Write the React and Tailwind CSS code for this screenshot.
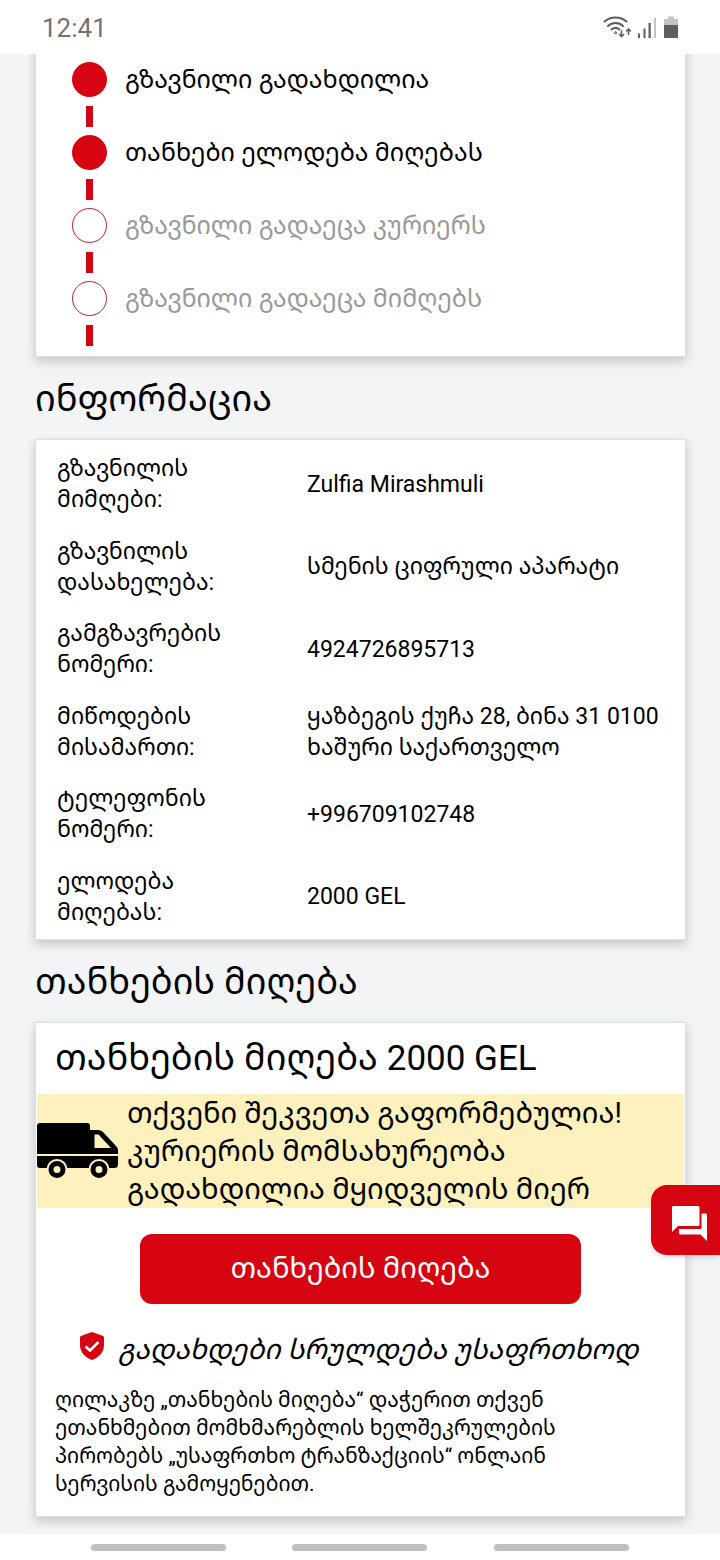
const steps = [
  { label: 'გზავნილი გადახდილია', done: true },
  { label: 'თანხები ელოდება მიღებას', done: true },
  { label: 'გზავნილი გადაეცა კურიერს', done: false },
  { label: 'გზავნილი გადაეცა მიმღებს', done: false },
];

const info = [
  { label: 'გზავნილის მიმღები:', value: 'Zulfia Mirashmuli' },
  { label: 'გზავნილის დასახელება:', value: 'სმენის ციფრული აპარატი' },
  { label: 'გამგზავრების ნომერი:', value: '4924726895713' },
  { label: 'მიწოდების მისამართი:', value: 'ყაზბეგის ქუჩა 28, ბინა 31 0100 ხაშური საქართველო' },
  { label: 'ტელეფონის ნომერი:', value: '+996709102748' },
  { label: 'ელოდება მიღებას:', value: '2000 GEL' },
];

const StatusBar = () => (
  <header className="relative z-10 flex h-[54px] items-center justify-between bg-white pt-[2px] pr-[41px] pl-[42px] text-[#737373]">
    <span className="text-[26px] leading-8">12:41</span>
    <div className="flex items-center gap-[6px]">
      <svg className="h-6 w-7" viewBox="0 0 28 24" fill="none" stroke="#5f5f5f" strokeWidth="2" strokeLinecap="round">
        <path d="M1.500 5.500C7.500 0 17.500 0 23.500 5.500" />
        <path d="M5 10C9 6 16 6 20 10" />
        <path d="M8.500 13.500C11 11.500 14 11.500 16.500 13.500" />
        <circle cx="12.500" cy="16.800" r="0.500" />
        <path d="M18.500 15v5.500M16.500 18.500l2 2 2-2M25.500 18.500v-5.500M23.500 15l2-2 2 2" strokeWidth="1.600" />
      </svg>
      <svg className="h-6 w-5" viewBox="0 0 20 24">
        <path d="M1 17.500h2V22H1zM6.500 12.500h2V22h-2zM11.500 7h2.300v15h-2.300z" fill="#5f5f5f" />
        <path d="M17 2h2v20h-2z" fill="#c4c4c4" />
      </svg>
      <svg className="h-6 w-4" viewBox="0 0 16 24">
        <path d="M5 0.500h6v2.500h4v7H1V3h4z" fill="#c4c4c4" />
        <path d="M1 9h14V22H1z" fill="#5f5f5f" />
      </svg>
    </div>
  </header>
);

const VanIcon = () => (
  <svg className="h-14 w-[82px] shrink-0" viewBox="0 0 82 56" aria-hidden="true">
    <path
      d="M3 0h47c2 0 3 1 3 3v4h8c2 0 4 1 5 2l13 14c1.500 1.500 2 3 2 5v13c0 2.500-1 4-3.500 4H3c-2 0-3-1-3-3V3c0-2 1-3 3-3z"
      fill="#000"
    />
    <path d="M57.500 11.500h4l12.500 13.500H57.500z" fill="#fef1bd" />
    <path d="M0 31h82v2H0z" fill="#fef1bd" />
    <circle cx="20" cy="46.500" r="10.500" fill="#fef1bd" />
    <circle cx="62" cy="46.500" r="10.500" fill="#fef1bd" />
    <circle cx="20" cy="46.500" r="6" fill="none" stroke="#000" strokeWidth="5" />
    <circle cx="62" cy="46.500" r="6" fill="none" stroke="#000" strokeWidth="5" />
  </svg>
);

const ShieldIcon = () => (
  <svg className="h-7 w-6 shrink-0" viewBox="0 0 24 28" aria-hidden="true">
    <path d="M12 0l10.500 3.800c1 .4 1.500 1 1.500 2V13c0 7-5 12.500-12 15C5 25.500 0 20 0 13V5.800c0-1 .5-1.600 1.500-2z" fill="#d60310" />
    <path d="M5.500 14.500l4.500 4 8.500-8.500" fill="none" stroke="#fff" strokeWidth="2.500" />
  </svg>
);

const App = () => {
  return (
    <div className="relative bg-[#f2f4f6] font-[Roboto,'Noto_Sans_Georgian','Noto_Sans','DejaVu_Sans',sans-serif] text-black">
      <StatusBar />

      <main className="pr-[34px] pb-[17px] pl-[35px]">
        {/* pulled up so the card runs under the status bar */}
        <section className="-mt-4 border border-[#dbe0e8] bg-white pt-[23px] pb-[2px] pl-9 shadow-[0_4px_10px_rgba(0,0,0,0.2)]">
          <ol>
            {steps.map((step) => (
              <li key={step.label} className="flex h-[73px] gap-[18px]">
                <div className="flex flex-col items-center gap-[9px]">
                  <span
                    className={`size-[35px] rounded-full border ${
                      step.done ? 'border-[#d60310] bg-[#d60310]' : 'border-[#b5203a] bg-white'
                    }`}
                  />
                  <span className="h-[21px] w-[7px] bg-[#cf0613]" />
                </div>
                <span className={`text-[25px] leading-[35px] ${step.done ? 'text-black' : 'text-[#999]'}`}>
                  {step.label}
                </span>
              </li>
            ))}
          </ol>
        </section>

        <h2 className="pt-[21px] pb-[19px] text-[36px] leading-[42px]">ინფორმაცია</h2>
        <section className="border border-[#dbe0e8] bg-white px-[21px] pt-[3px] pb-px shadow-[0_4px_10px_rgba(0,0,0,0.2)]">
          <table className="h-[495px] w-full table-fixed text-left text-[23px] leading-[31px]">
            <tbody>
              {info.map((row) => (
                <tr key={row.label}>
                  <th scope="row" className="w-[250px] py-[10px] pr-14 font-normal">{row.label}</th>
                  <td className="py-[10px]">{row.value}</td>
                </tr>
              ))}
            </tbody>
          </table>
        </section>

        <h2 className="pt-[21px] pb-[19px] text-[36px] leading-[42px]">თანხების მიღება</h2>
        <section className="border border-[#dbe0e8] bg-white pb-[18px] shadow-[0_4px_10px_rgba(0,0,0,0.2)]">
          <h3 className="px-[19px] py-[14px] text-[36px] leading-[42px]">
            თანხების მიღება <span className="text-[35px]">2000 GEL</span>
          </h3>
          <div className="mx-px flex items-center gap-2 bg-[#fef1bd]">
            <VanIcon />
            <p className="text-[29px] leading-[38px]">
              თქვენი შეკვეთა გაფორმებულია!
              <br />
              კურიერის მომსახურეობა
              <br />
              გადახდილია მყიდველის მიერ
            </p>
          </div>
          <button
            type="button"
            className="mx-auto mt-[26px] block h-[70px] w-[441px] cursor-pointer rounded-xl bg-[#d60310] text-[29px] text-white"
          >
            თანხების მიღება
          </button>
          <div className="mt-7 flex gap-[14px] pl-11">
            <ShieldIcon />
            <em className="text-[28px] leading-[36px]">გადახდები სრულდება უსაფრთხოდ</em>
          </div>
          <p className="mt-[18px] px-[19px] text-[21px] leading-7">
            ღილაკზე „თანხების მიღება“ დაჭერით თქვენ
            <br />
            ეთანხმებით მომხმარებლის ხელშეკრულების
            <br />
            პირობებს „უსაფრთხო ტრანზაქციის“ ონლაინ
            <br />
            სერვისის გამოყენებით.
          </p>
        </section>
      </main>

      <button
        type="button"
        aria-label="Chat"
        className="absolute top-[1185px] right-0 flex h-[70px] w-[69px] cursor-pointer items-center justify-center rounded-l-2xl bg-[#d60310] pt-2 pl-2 shadow-md"
      >
        <svg className="h-9 w-9" viewBox="0 0 36 36" fill="#fff" aria-hidden="true">
          <path d="M1.500 0h24.500c.8 0 1.500.6 1.500 1.500v17c0 1-.7 1.500-1.500 1.500H6l-6 6V1.500C0 .6.700 0 1.500 0z" />
          <path d="M29.500 7.500h4c.9 0 1.500.6 1.500 1.500v26l-6.500-6.500H8.500c-1 0-1.500-.6-1.500-1.500V23h22.500z" />
        </svg>
      </button>

      <nav className="flex h-[26px] items-center justify-around bg-white px-[58px]">
        <span className="h-[7px] w-[135px] rounded-full bg-[#c0c0c0]" />
        <span className="h-[7px] w-[135px] rounded-full bg-[#c0c0c0]" />
        <span className="h-[7px] w-[135px] rounded-full bg-[#c0c0c0]" />
      </nav>
    </div>
  );
};

export default App;
